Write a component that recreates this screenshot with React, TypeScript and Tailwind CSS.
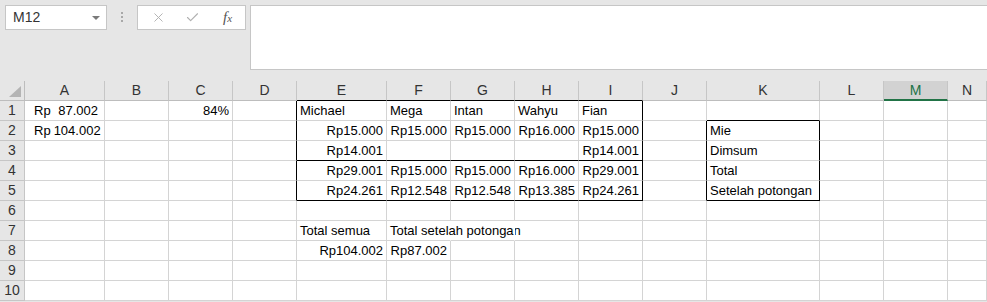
import { X, Check } from 'lucide-react';

// Column letters with their widths in the sheet
const columns = [
  { key: 'A', width: 'w-[80px]' },
  { key: 'B', width: 'w-[64px]' },
  { key: 'C', width: 'w-[64px]' },
  { key: 'D', width: 'w-[64px]' },
  { key: 'E', width: 'w-[90px]' },
  { key: 'F', width: 'w-[64px]' },
  { key: 'G', width: 'w-[64px]' },
  { key: 'H', width: 'w-[64px]' },
  { key: 'I', width: 'w-[64px]' },
  { key: 'J', width: 'w-[64px]' },
  { key: 'K', width: 'w-[113px]' },
  { key: 'L', width: 'w-[64px]' },
  { key: 'M', width: 'w-[64px]' },
  { key: 'N', width: 'flex-1' },
];

interface Cell {
  text?: string;
  right?: boolean;
  acct?: string;
}

const cells: Record<string, Cell> = {
  A1: { acct: '87.002' },
  A2: { acct: '104.002' },
  C1: { text: '84%', right: true },
  E1: { text: 'Michael' },
  F1: { text: 'Mega' },
  G1: { text: 'Intan' },
  H1: { text: 'Wahyu' },
  I1: { text: 'Fian' },
  E2: { text: 'Rp15.000', right: true },
  F2: { text: 'Rp15.000', right: true },
  G2: { text: 'Rp15.000', right: true },
  H2: { text: 'Rp16.000', right: true },
  I2: { text: 'Rp15.000', right: true },
  K2: { text: 'Mie' },
  E3: { text: 'Rp14.001', right: true },
  I3: { text: 'Rp14.001', right: true },
  K3: { text: 'Dimsum' },
  E4: { text: 'Rp29.001', right: true },
  F4: { text: 'Rp15.000', right: true },
  G4: { text: 'Rp15.000', right: true },
  H4: { text: 'Rp16.000', right: true },
  I4: { text: 'Rp29.001', right: true },
  K4: { text: 'Total' },
  E5: { text: 'Rp24.261', right: true },
  F5: { text: 'Rp12.548', right: true },
  G5: { text: 'Rp12.548', right: true },
  H5: { text: 'Rp13.385', right: true },
  I5: { text: 'Rp24.261', right: true },
  K5: { text: 'Setelah potongan' },
  E7: { text: 'Total semua' },
  F7: { text: 'Total setelah potongan' },
  E8: { text: 'Rp104.002', right: true },
  F8: { text: 'Rp87.002', right: true },
};

const tableCols = ['E', 'F', 'G', 'H', 'I'];

// which cell edges carry the black borders of the two tables
const rightEdge = (c: string, r: number): 'black' | 'hidden' | 'grid' => {
  if ((c === 'D' || c === 'I') && r >= 1 && r <= 5) return 'black';
  if ((c === 'J' || c === 'K') && r >= 2 && r <= 5) return 'black';
  if ((c === 'F' || c === 'G') && r === 7) return 'hidden';
  return 'grid';
};

const bottomBlack = (c: string, r: number) => {
  if (tableCols.includes(c) && (r === 0 || r === 3 || r === 5)) return true;
  if (c === 'K' && (r === 1 || r === 5)) return true;
  return false;
};

const rows = [1, 2, 3, 4, 5, 6, 7, 8, 9, 10];

const App = () => {
  return (
    <div className="w-[987px] h-[302px] overflow-hidden bg-[#e6e6e6] font-['Liberation_Sans',Arial,sans-serif] text-[13px] text-black">
      {/* Name box + formula bar */}
      <div className="flex h-[81px] pt-[5px] pl-[5px]">
        <div className="flex h-[25px] w-[102px] items-center justify-between border border-[#c6c6c6] bg-white pl-[7px] pr-[6px] text-[14px] text-[#333]">
          <span>M12</span>
          <span className="mt-[1px] h-0 w-0 border-x-[4px] border-t-[4px] border-x-transparent border-t-[#7a7a7a]" />
        </div>
        <div className="flex w-[30px] flex-col items-center gap-[2px] pt-[7px]">
          <span className="h-[2px] w-[2px] bg-[#a8a8a8]" />
          <span className="h-[2px] w-[2px] bg-[#a8a8a8]" />
          <span className="h-[2px] w-[2px] bg-[#a8a8a8]" />
        </div>
        <div className="flex h-[25px] w-[109px] items-center border border-[#c6c6c6] bg-white">
          <X className="ml-[13px] text-[#b0b0b0]" size={15} strokeWidth={1.5} />
          <Check className="ml-[19px] text-[#b0b0b0]" size={15} strokeWidth={1.8} />
          <span className="ml-[23px] font-['Liberation_Serif',serif] text-[15px] italic text-[#555]">
            f<span className="text-[11px]">x</span>
          </span>
        </div>
        <div className="ml-[4px] h-[65px] flex-1 border-y border-l border-[#c6c6c6] bg-white" />
      </div>

      {/* Column headers */}
      <div className="flex h-[20px]">
        <div className="flex w-[25px] items-end justify-end border-r border-b border-[#bdbdbd] pr-[3px] pb-[3px]">
          <span className="h-0 w-0 border-l-[12px] border-t-[11px] border-l-transparent border-t-transparent border-b-0 border-r-0 [border-bottom:11px_solid_#b4b4b4]" />
        </div>
        {columns.map(col => (
          <div
            key={col.key}
            className={`${col.width} flex items-center justify-center border-r border-[#c6c6c6] text-[14px] ${
              col.key === 'M'
                ? 'border-b-2 border-b-[#217346] bg-[#d2d2d2] text-[#217346]'
                : bottomBlack(col.key, 0)
                  ? 'border-b border-b-black text-[#333]'
                  : 'border-b border-b-[#bdbdbd] text-[#333]'
            }`}
          >
            {col.key}
          </div>
        ))}
      </div>

      {/* Sheet rows */}
      {rows.map(r => (
        <div key={r} className="flex h-[20px] bg-white">
          <div className="flex w-[25px] items-center justify-center border-r border-b border-[#c6c6c6] bg-[#e6e6e6] text-[14px] text-[#333]">
            {r}
          </div>
          {columns.map(col => {
            const cell = cells[`${col.key}${r}`];
            const edge = rightEdge(col.key, r);
            return (
              <div
                key={col.key}
                className={`${col.width} flex whitespace-nowrap border-r border-b px-[3px] pt-[2px] leading-[16px] ${
                  edge === 'black' ? 'border-r-black' : edge === 'hidden' ? 'border-r-white' : 'border-r-[#d4d4d4]'
                } ${bottomBlack(col.key, r) ? 'border-b-black' : 'border-b-[#d4d4d4]'} ${
                  cell?.right ? 'justify-end' : 'justify-start'
                }`}
              >
                {cell?.acct ? (
                  <div className="flex w-full justify-between gap-[3px] pl-[6px] pr-[3px]">
                    <span>Rp</span>
                    <span>{cell.acct}</span>
                  </div>
                ) : (
                  cell?.text
                )}
              </div>
            );
          })}
        </div>
      ))}
    </div>
  );
};

export default App;
